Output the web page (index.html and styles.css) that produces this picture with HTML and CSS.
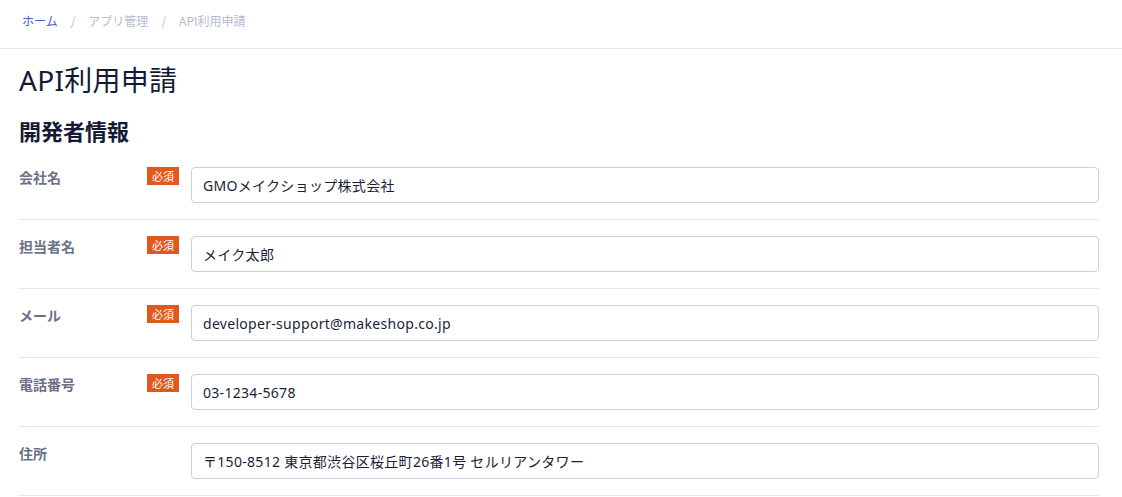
FILE: index.html
```html
<!DOCTYPE html>
<html lang="ja">
<head>
<meta charset="UTF-8" />
<title>API利用申請</title>
<link rel="stylesheet" href="styles.css">
</head>
<body>

<nav class="breadcrumb">
  <a href="#">ホーム</a>
  <span class="sep">/</span>
  <span>アプリ管理</span>
  <span class="sep">/</span>
  <span>API利用申請</span>
</nav>

<main class="page">
  <h1>API利用申請</h1>
  <h2>開発者情報</h2>

  <div class="row">
    <label class="label" for="company">会社名</label>
    <span class="badge">必須</span>
    <input id="company" type="text" value="GMOメイクショップ株式会社" />
  </div>
  <div class="row">
    <label class="label" for="person">担当者名</label>
    <span class="badge">必須</span>
    <input id="person" type="text" value="メイク太郎" />
  </div>
  <div class="row">
    <label class="label" for="mail">メール</label>
    <span class="badge">必須</span>
    <input id="mail" type="text" value="developer-support@makeshop.co.jp" />
  </div>
  <div class="row">
    <label class="label" for="tel">電話番号</label>
    <span class="badge">必須</span>
    <input id="tel" type="text" value="03-1234-5678" />
  </div>
  <div class="row">
    <label class="label" for="addr">住所</label>
    <span></span>
    <input id="addr" type="text" value="〒150-8512 東京都渋谷区桜丘町26番1号 セルリアンタワー" />
  </div>
</main>

</body>
</html>
```

FILE: styles.css
```css
body { margin: 0; background: #fff; color: #1a1f36; font-family: "Noto Sans", "Noto Sans CJK JP", sans-serif; }
.breadcrumb { height: 49px; box-sizing: border-box; padding: 11px 0 0 22px; display: flex; align-items: flex-start; gap: 13px; font-size: 12px; line-height: 20px; color: #b4bbd2; border-bottom: 1px solid #e8e8ec; font-family: "Noto Sans CJK JP", sans-serif; }
.breadcrumb a { color: #4a5cc9; text-decoration: none; }
.breadcrumb .sep { color: #b4bbd2; }
.page { padding: 0 23px 0 19px; }
h1 { font-size: 28px; font-weight: 400; margin: 11px 0 0; line-height: 40px; color: #141a33; letter-spacing: 0.3px; }
h2 { font-size: 22px; font-weight: 700; margin: 15px 0 0; line-height: 30px; color: #141a33; font-family: "Noto Sans CJK JP", sans-serif; }
.row { display: grid; grid-template-columns: 116px 32px 1fr; column-gap: 12px; align-items: start; padding: 16px 0; border-bottom: 1px solid #e4e7ee; }
.row:first-of-type { padding-top: 22px; }
.label { font-size: 14px; font-weight: 700; color: #6b7186; line-height: 18px; padding-top: 1px; font-family: "Noto Sans CJK JP", sans-serif; }
.badge { background: #e0581c; color: #fff; font-size: 11px; line-height: 18px; text-align: center; font-family: "Noto Sans CJK JP", sans-serif; }
input { font-family: inherit; font-size: 14px; letter-spacing: 0.3px; color: #1a1f36; border: 1px solid #c8cfe0; border-radius: 4px; height: 36px; box-sizing: border-box; padding: 0 11px; outline: none; }
```
